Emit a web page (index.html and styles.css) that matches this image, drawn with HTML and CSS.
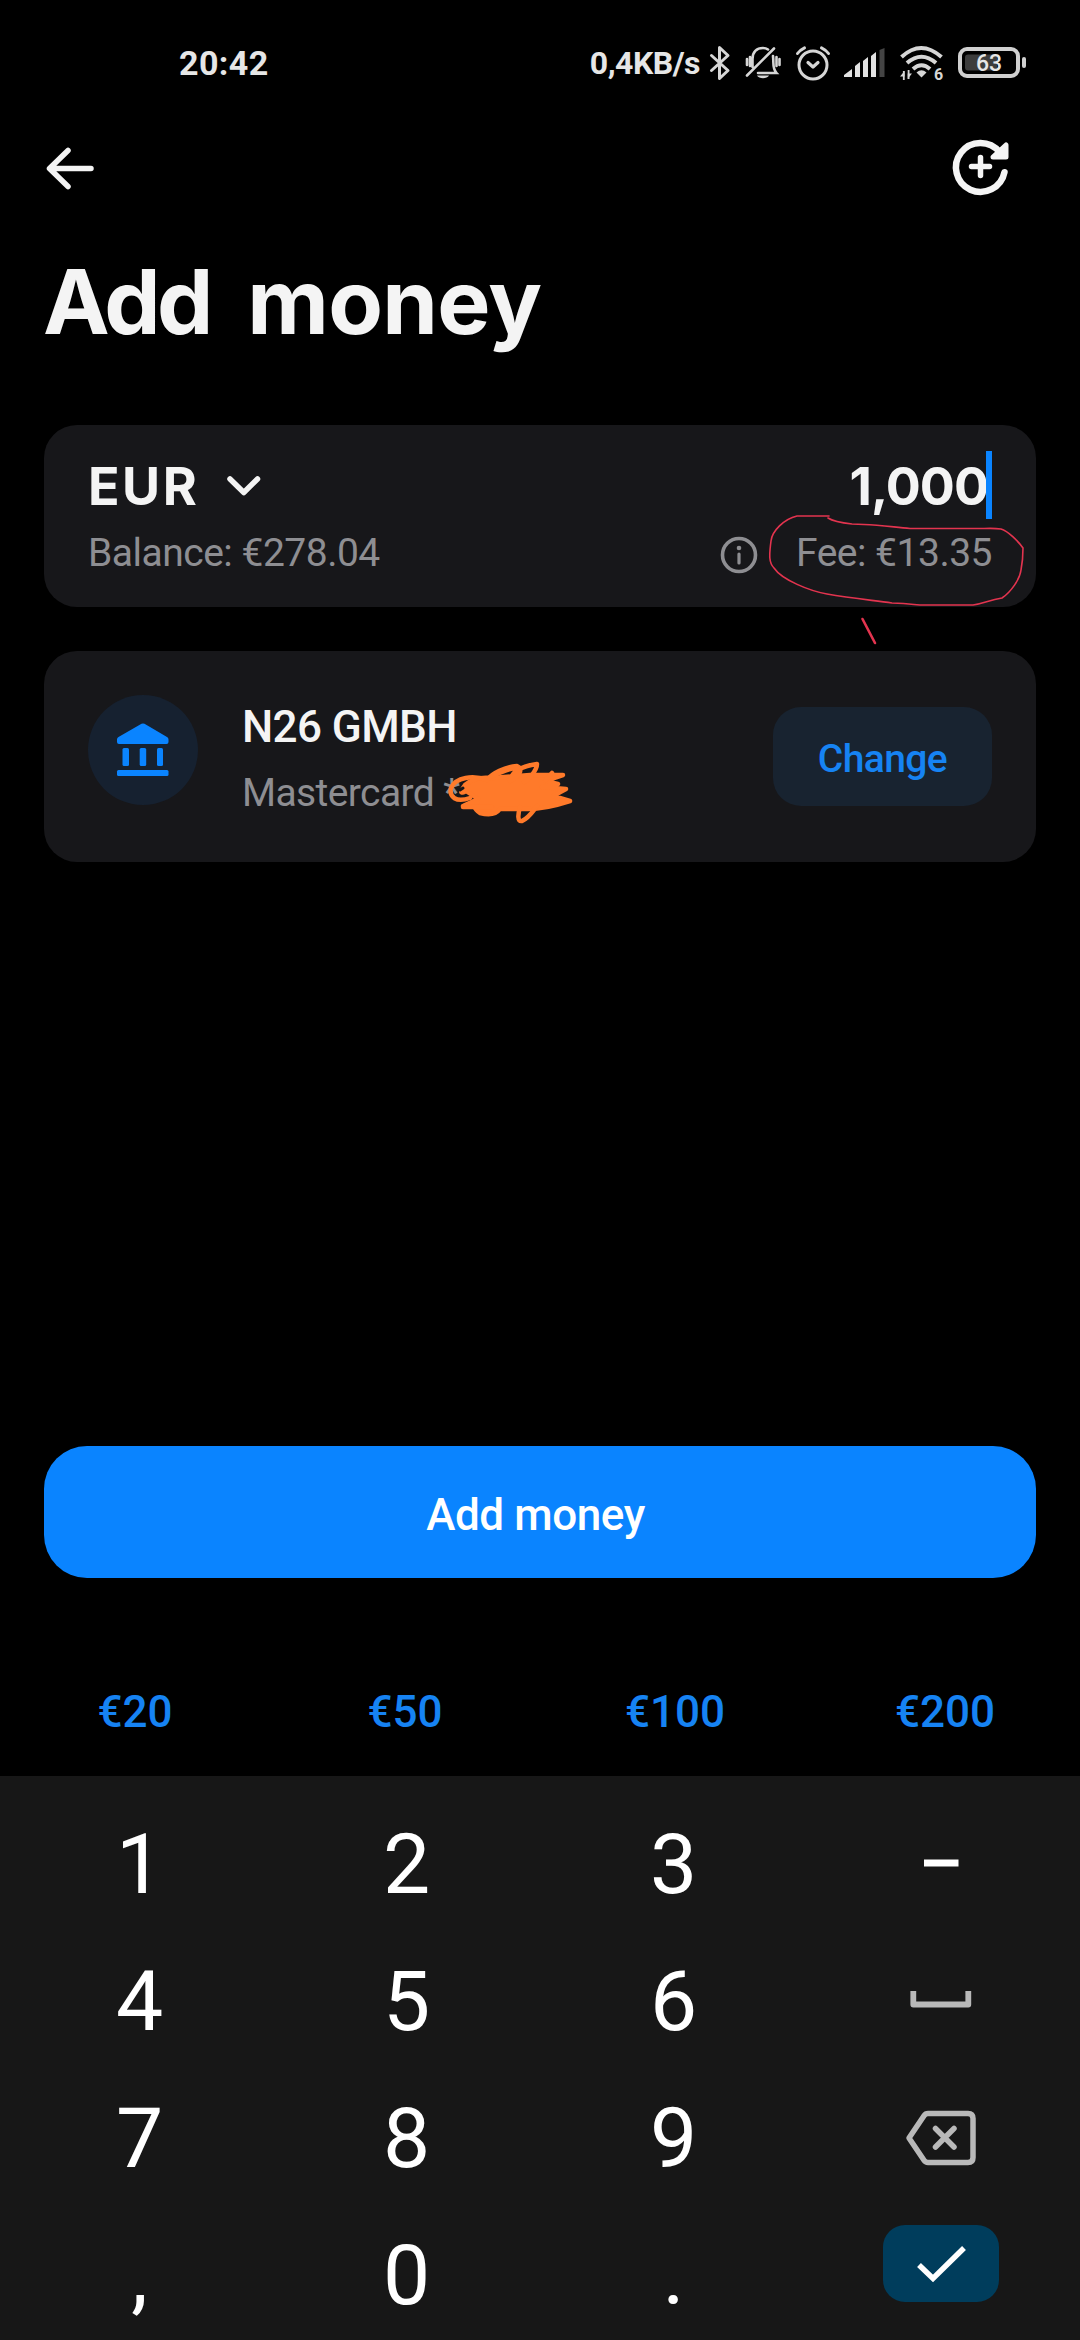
FILE: index.html
```html
<!DOCTYPE html>
<html lang="en">
<head>
<meta charset="utf-8">
<title>Add money</title>
<link rel="stylesheet" href="styles.css">
</head>
<body>
<div class="screen">
  <div class="status">
    <span class="time">20:42</span>
    <div class="indicators">
      <span class="speed">0,4KB/s</span>
      <svg class="bt" width="22" height="36" viewBox="0 0 22 36" fill="none" stroke="#d6d6d6" stroke-width="3" stroke-linejoin="round" stroke-linecap="round"><path d="M2.500 10.500 19 25.500 10.500 33.500V2.500L19 10.500 2.500 25.500"/></svg>
      <svg class="bell" width="36" height="36" viewBox="0 0 36 36" fill="none" stroke="#d6d6d6" stroke-width="2.600" stroke-linecap="round"><path d="M7.500 22V14C7.500 7 11.500 3 18 3q3 0 5 1.500M28 11c1 8-1 12 3.500 17H13M2 30.500 29 3.500M2 14v6M5 12v9M31.500 12v9M34.500 14v6"/><path d="M12 30.500h12c-2 3.600-10 3.600-12 0z" fill="#d6d6d6" stroke="none"/></svg>
      <svg class="alarm" width="36" height="36" viewBox="0 0 36 36" fill="none" stroke="#d6d6d6" stroke-width="3" stroke-linecap="round" stroke-linejoin="round"><circle cx="18" cy="20" r="14"/><path d="M2.500 8.500Q5 5 9.500 2.800M26.500 2.800Q31 5 33.500 8.500"/><path d="M13 17.500 18 22l5-4.500" stroke-width="3.200"/></svg>
      <svg class="signal" width="41" height="30" viewBox="0 0 41 30" fill="#e2e2e2"><path d="M0 29v-2l8-6v8zM11 29V18l5-4v15zM19 29V13l5-4v20zM27 29V8l5-4v25z"/><path d="M35.500 29V2l5-2v29z" fill="#444"/></svg>
      <svg class="wifi" width="44" height="36" viewBox="0 0 44 36" fill="none" stroke="#d6d6d6" stroke-width="4"><path d="M1.500 12Q21 -6 41.500 12M7 18Q21.500 5.500 36 18M13 24Q21.500 16.500 30 24"/><path d="M16.500 27.500q5-4.500 10 0l-5 5z" fill="#d6d6d6" stroke="none"/><path d="M3.800 26v9M8.600 25v9" stroke-width="1.800"/><path d="M0 31.500 4.500 26v5.500zM12 28.500 7.700 34v-5.500z" fill="#d6d6d6" stroke="none"/><text class="six" x="34" y="34.500">6</text></svg>
      <svg class="battery" width="70" height="32" viewBox="0 0 70 32"><rect x="2" y="2" width="58" height="27" rx="7" fill="none" stroke="#d0d0d0" stroke-width="4"/><rect x="7" y="7.500" width="32" height="16" rx="3" fill="#3c3c3c"/><rect x="64" y="10" width="4" height="11" rx="2" fill="#d0d0d0"/><text class="level" x="31" y="24">63</text></svg>
    </div>
  </div>

  <div class="topbar">
    <svg width="48" height="43" viewBox="0 0 48 43" fill="none" stroke="#f4f4f4" stroke-width="5.500" stroke-linecap="round" stroke-linejoin="round"><path d="M45 21.500H4M22 3.500 3.500 21.500 22 39.500"/></svg>
    <svg class="refill" width="58" height="58" viewBox="0 0 58 58" fill="none" stroke="#f4f4f4" stroke-linecap="round" stroke-linejoin="round"><path d="M47.500 14A24.500 24.500 0 1 0 52.500 34.200" stroke-width="6.500"/><path d="M28.500 19.500v18M19.500 28.500h18" stroke-width="5.500"/><path d="M54 7v12H41z" fill="#f4f4f4" stroke-width="5"/></svg>
  </div>

  <h1 class="title"><span class="tight">Add</span> money</h1>

  <section class="card amount">
    <div class="row main">
      <span class="currency">EUR</span>
      <svg class="chevron" width="36" height="22" viewBox="0 0 36 22" fill="none" stroke="#f4f4f4" stroke-width="5.500" stroke-linecap="round" stroke-linejoin="round"><path d="M4 4 17.800 17.500 31.500 4"/></svg>
      <span class="value">1,000</span><i class="caret"></i>
    </div>
    <div class="row sub">
      <span class="balance">Balance: €278.04</span>
      <svg class="info" width="38" height="38" viewBox="0 0 38 38"><g fill="none" stroke="#8e8e92" stroke-width="3.600"><circle cx="19" cy="19" r="16.500"/><path d="M19 18v9" stroke-width="3.200" stroke-linecap="round"/></g><circle cx="19" cy="12" r="2.300" fill="#8e8e92"/></svg>
      <span class="fee">Fee: €13.35</span>
    </div>
  </section>

  <section class="card source">
    <div class="avatar">
      <svg width="54" height="54" viewBox="0 0 54 54" fill="#0a84ff"><path d="M1 16.500q0-1.800 1.500-2.600L25.500.8q1.500-.8 3 0L51 13.900q1.500.8 1.500 2.600V19q0 2-2 2H3q-2 0-2-2z"/><rect x="6.500" y="25" width="6.500" height="18" rx="1.500"/><rect x="23.700" y="25" width="6.500" height="18" rx="1.500"/><rect x="41" y="25" width="6" height="18" rx="1.500"/><rect x="1" y="47" width="51.500" height="6" rx="1.500"/></svg>
    </div>
    <div class="bank">
      <div class="name">N26 GMBH</div>
      <div class="kind">Mastercard *</div>
    </div>
    <button class="change">Change</button>
  </section>

  <button class="submit">Add money</button>

  <div class="presets"><span>€20</span><span>€50</span><span>€100</span><span>€200</span></div>

  <div class="keyboard">
    <span>1</span><span>2</span><span>3</span>
    <span class="minus"><svg width="36" height="10" viewBox="0 0 36 10"><rect x="1" y="1.500" width="34.500" height="7" fill="#fff"/></svg></span>
    <span>4</span><span>5</span><span>6</span>
    <span class="space"><svg width="62" height="18" viewBox="0 0 62 18"><path d="M3.300 1v13.500h55V1" fill="none" stroke="#b9b9b9" stroke-width="5.800" stroke-linejoin="round"/></svg></span>
    <span>7</span><span>8</span><span>9</span>
    <span class="erase"><svg width="72" height="56" viewBox="0 0 72 56" fill="none" stroke="#b9b9b9" stroke-width="5.500" stroke-linejoin="round" stroke-linecap="round"><path d="M23 3.500H63q5 0 5 5v39q0 5-5 5H23q-2.500 0-4-2.200L4 28 19 5.700Q20.500 3.500 23 3.500z"/><path d="M30.500 18.500 49 37M49 18.500 30.500 37"/></svg></span>
    <span>,</span><span>0</span><span>.</span>
    <span class="enter"><i><svg width="50" height="38" viewBox="0 0 50 38" fill="none" stroke="#fff" stroke-width="5.500"><path d="M3 20 17 33.500 48 3"/></svg></i></span>
  </div>

  <!-- hand-drawn markup over the cards -->
  <svg class="ink" width="1080" height="900" viewBox="0 0 1080 900" fill="none" stroke-linecap="round" stroke-linejoin="round">
    <g stroke="#e3344f">
      <path stroke-width="1.600" d="M829 516H797C784 519 772 531 771 541C769 556 769 563 774 568C782 580 810 591 827 594C850 598 870 600 892 603C915 604 915 605 925 605H973C985 603 989 600 1002 598C1011 592 1020 579 1021 570Q1023 560 1023 548C1018 541 1008 531 1001 529Q994 528 984 528.500H910C893 527 880 525 864 524.500L852 524Q834 522 828 518"/>
      <path stroke-width="2.600" d="M862.500 619 875 643"/>
    </g>
    <g stroke="#ff7a2a" stroke-width="4.500">
      <path fill="#ff7a2a" d="M466 791Q457 796 465 785Q475 776 492 778L530 775 563 775 545 781 558 784 542 787 566 789 553 796 570 801Q545 809 528 809L500 809Q494 817 480 813Q471 806 477 803L463 806 478 799Z"/>
      <path d="M470 798C456 803 449 797 451 788C456 777 473 775 487 780C492 773 505 767 517 766C524 769 519 777 510 781C512 768 530 765 537 764C537 770 528 781 524 782M490 777C503 771 512 767 518 768M463 807H492M552 773L546 780M520 807C518 814 517 822 522 821C530 817 532 812 537 806"/>
      <path stroke="#17171a" stroke-width="3" d="M460 790 463 788"/>
    </g>
  </svg>
</div>
</body>
</html>
```
FILE: styles.css
```css
* { box-sizing: border-box; }
body {
  margin: 0;
  background: #000;
  color: #f4f4f4;
  font-family: Roboto, "Liberation Sans", sans-serif;
}
.screen {
  position: relative;
  width: 1080px;
  height: 2340px;
  overflow: hidden;
  display: flex;
  flex-direction: column;
}
svg { display: block; flex: none; overflow: visible; }
button { border: 0; font: inherit; padding: 0; }

.status {
  height: 110px;
  padding: 16px 52px 0 179px;
  display: flex;
  align-items: center;
  justify-content: space-between;
  color: #e6e6e6;
  font-weight: 700;
}
.time { font-size: 34px; line-height: 40px; letter-spacing: .4px; }
.indicators { display: flex; align-items: center; }
.speed { font-size: 32px; line-height: 40px; margin-right: 9px; letter-spacing: -.5px; }
.bell { margin-left: 14px; }
.alarm { margin-left: 14px; }
.signal { margin-left: 13px; }
.wifi { margin-left: 15px; }
.battery { margin-left: 14px; }
.six { font: 700 16px Roboto, sans-serif; fill: #d6d6d6; stroke: none; }
.level { font: 500 23px Roboto, sans-serif; fill: #e6e6e6; text-anchor: middle; }

.topbar {
  height: 117px;
  padding: 0 70px 0 46px;
  display: flex;
  align-items: center;
  justify-content: space-between;
}
.refill { margin-bottom: 4px; }
.title {
  margin: 25px 0 73px 43px;
  font: 700 89.4px/100px Inter, sans-serif;
  letter-spacing: -.7px;
  word-spacing: 17px;
  white-space: nowrap;
}
.tight { letter-spacing: -3.5px; }

.card {
  margin: 0 44px;
  border-radius: 33px;
  background: #17171a;
  flex: none;
}
.amount { height: 182px; padding: 26px 44px 0; }
.row { display: flex; }
.main { height: 72px; font: 700 52px/72px Inter, sans-serif; }
.currency { letter-spacing: 2.5px; }
.chevron { margin: 24px 0 0 27px; }
.value { margin-left: auto; letter-spacing: -1px; }
.caret { width: 6px; height: 68px; margin-left: -2px; background: #0a84ff; }
.sub { height: 60px; font-size: 39px; line-height: 60px; letter-spacing: -.5px; color: #8e8e92; }
.info { margin: 13px 38px 0 auto; }

.source { height: 211px; margin-top: 44px; padding: 44px 44px 0; display: flex; }
.avatar {
  width: 110px;
  height: 110px;
  border-radius: 50%;
  background: #162130;
  display: flex;
  align-items: center;
  justify-content: center;
}
.bank { margin-left: 44px; letter-spacing: -.6px; }
.name { font-size: 44px; font-weight: 500; line-height: 64px; }
.kind { font-size: 39px; line-height: 69px; color: #8e8e92; }
.change {
  width: 219px;
  height: 99px;
  margin: 12px 0 0 auto;
  padding-top: 4px;
  border-radius: 28px;
  background: #182330;
  color: #1683f3;
  font-size: 39px;
  font-weight: 500;
  letter-spacing: -.6px;
}

.submit {
  height: 132px;
  margin: auto 44px 70px;
  padding: 5px 9px 0 0;
  border-radius: 43px;
  background: #0a84ff;
  color: #fff;
  font-size: 44px;
  font-weight: 500;
  letter-spacing: -.4px;
  flex: none;
}
.presets {
  height: 128px;
  flex: none;
  display: grid;
  grid-template-columns: repeat(4, 1fr);
  text-align: center;
  line-height: 128px;
  font-size: 44px;
  font-weight: 500;
  color: #1683f3;
}
.keyboard {
  height: 564px;
  flex: none;
  padding: 20px 6px 0;
  display: grid;
  grid-template-columns: repeat(4, 1fr);
  grid-auto-rows: 137px;
  overflow: hidden;
  background: #171717;
  color: #fff;
  font-size: 84px;
}
.keyboard > span { display: flex; align-items: center; justify-content: center; line-height: 1; }
.keyboard > .minus { padding-bottom: 3px; }
.keyboard > .erase { padding-bottom: 2px; }
.keyboard > .space { align-items: flex-start; padding-top: 57px; }
.keyboard > .enter { align-items: flex-start; padding-top: 18px; }
.enter i {
  width: 116px;
  height: 77px;
  border-radius: 22px;
  background: #003d5c;
  display: flex;
  align-items: center;
  justify-content: center;
}
.ink { position: absolute; left: 0; top: 0; pointer-events: none; }
```
